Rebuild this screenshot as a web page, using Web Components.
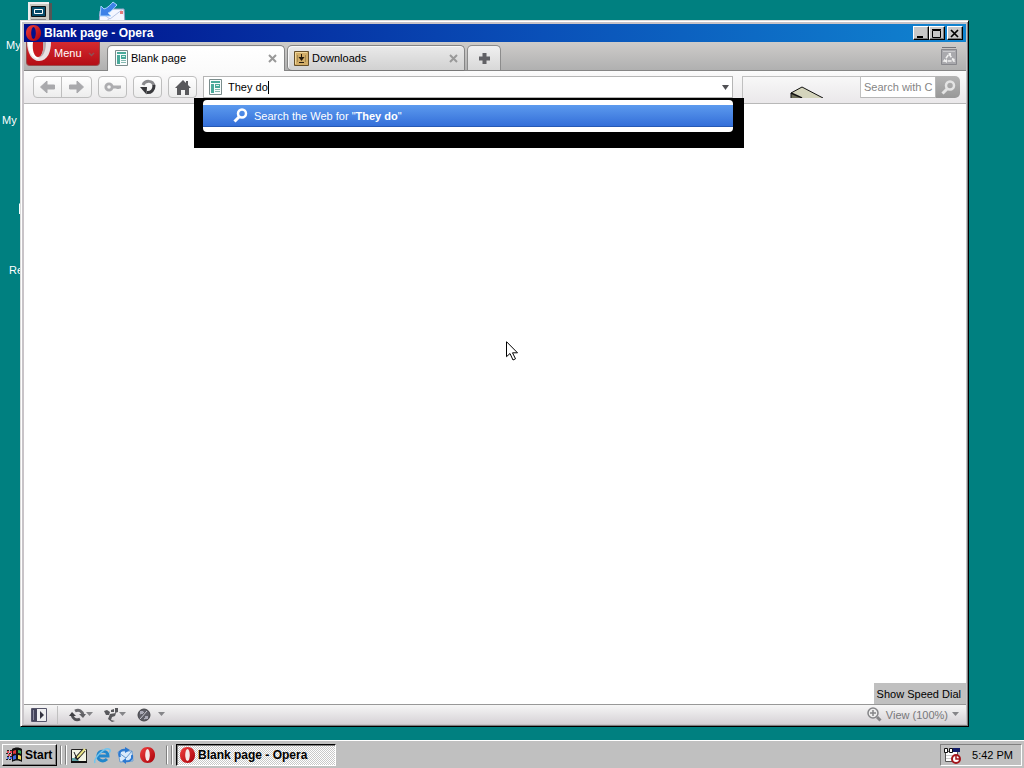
<!DOCTYPE html>
<html lang="en">
<head>
<meta charset="utf-8">
<title>Blank page - Opera</title>
<style>
  html, body { height: 100%; }
  body {
    margin: 0;
    overflow: hidden;
    background: #008080;
    font: 11px/14px "Liberation Sans", Arial, sans-serif;
    color: #000;
  }
</style>
</head>
<body>
<desktop-screen>
  <desktop-icon icon="computer" label="My" style="left: 6px; top: 2px"></desktop-icon>
  <desktop-icon icon="mail" style="left: 98px; top: 0"></desktop-icon>
  <desktop-icon label="My" style="left: 2px; top: 77px"></desktop-icon>
  <desktop-icon icon="sliver" style="left: 18px; top: 202px"></desktop-icon>
  <desktop-icon label="Re" style="left: 9px; top: 227px"></desktop-icon>
  <opera-window caption="Blank page - Opera">
    <opera-tab slot="tabs" icon="page" active>Blank page</opera-tab>
    <opera-tab slot="tabs" icon="download">Downloads</opera-tab>
    <address-bar slot="address" value="They do"></address-bar>
  </opera-window>
  <task-bar slot="taskbar" time="5:42 PM">Blank page - Opera</task-bar>
</desktop-screen>

<script>
// icon name: [width, height, svg content]
const ICONS = {
  opera: [15, 16, `<defs><linearGradient id="g" x2="1" y2="1"><stop stop-color="#f04040"/><stop offset="1" stop-color="#a80008"/></linearGradient></defs><path fill="url(#g)" d="M7.500 0C12 0 15 3.500 15 8s-3 8-7.500 8S0 12.500 0 8s3-8 7.500-8z"/><ellipse cx="7.500" cy="8" rx="2.300" ry="6" fill="var(--hole, #f4e8e8)"/>`],
  operaBig: [24, 20, `<path fill="#e9e2e4" d="M0 0h24c0 9-3 19-12 19C5 19 0 11 0 0z"/><path fill="#fff" d="M1 0h5c0 8 2 14 6 17C5 17 1 9 1 0z"/><path fill="#c8181f" d="M6 0h10c1 8-1 15-5 15S5 8 6 0z"/><path fill="#b5aaac" d="M16 0h3c0 8-2 14-7 16 4-4 5-10 4-16z"/>`],
  page: [13, 16, `<path fill="#f8fcfc" stroke="#7a8c8c" d="M.5.500h12v15H.500z"/><path fill="#49a99a" d="M2 2h9v2H2zM2 5h3v9H2zM6 5h5v4H6z"/><path stroke="#84b8b0" d="M6 10.500h5M6 12.500h5"/><path stroke="#d4f0e8" d="M7 6.500h3"/>`],
  download: [15, 15, `<path fill="#d2ad68" stroke="#66502b" d="M.5.500h14v14H.500z"/><path fill="none" stroke="#f0d79b" d="M1.500 13V1.500H13"/><path stroke="#a58a52" d="M3.500 4v7M11.500 4v7"/><path fill="#251b0c" d="M7 3h1v3h2.500l-3 4-3-4H7zM5 11h5v1H5z"/>`],
  close: [9, 9, `<path stroke="#999" stroke-width="2" d="M1 1l7 7M8 1L1 8"/>`],
  plus: [13, 13, `<path fill="#616165" d="M4.500 1h4v3.500H12v4H8.500V12h-4V8.500H1v-4h3.500z"/>`],
  trash: [18, 20, `<path fill="#a9a9ad" d="M1 3h16v16H1z"/><path stroke="#747478" d="M2 1.500h14"/><path fill="none" stroke="#88888d" d="M1.500 3.500h15v15h-15z"/><path stroke="#c9c9cc" d="M3 5.500h12"/><path fill="none" stroke="#f0f0f0" stroke-width="1.500" stroke-dasharray="4 1.500" d="M9 8l5 7H4z"/><path fill="#f0f0f0" d="M8 7h3v3zM12 12l3 1-2 3zM7 13v4l-3-2z"/>`],
  back: [17, 14, `<path fill="#a9a9ac" stroke="#a9a9ac" stroke-linejoin="round" d="M8 1v4h7.500v4H8v4L1.500 7z"/>`],
  forward: [17, 14, `<path fill="#a9a9ac" stroke="#a9a9ac" stroke-linejoin="round" d="M9 1v4H1.500v4H9v4l6.500-6z"/>`],
  key: [18, 10, `<circle cx="5" cy="5" r="3.200" fill="none" stroke="#adadb0" stroke-width="2.800"/><path fill="#adadb0" d="M8 3.500h9v3h-1.500V7h-3v-.500H8z"/>`],
  reload: [18, 16, `<path fill="none" stroke="#8a8a8d" stroke-width="3" d="M4 6c2-5 10-5 11 1"/><path fill="none" stroke="#39393c" stroke-width="3" d="M14.800 6c.8 5-3 8-7 7.500"/><path fill="#39393c" d="M1 8h7l-.5 7.500z"/>`],
  home: [16, 15, `<path fill="#59595c" d="M8 0L0 8h2v7h4v-5h4v5h4V8h2l-3-3V1h-2v2z"/>`],
  down: [7, 5, `<path fill="#505054" d="M0 0h7L3.500 5z"/>`],
  statusDown: [7, 5, `<path fill="#858588" d="M0 0h7L3.500 4z"/>`],
  menuDown: [7, 5, `<path fill="none" stroke="#8e5054" stroke-width="1.500" d="M1 1l2.500 2.500L6 1"/>`],
  search: [15, 15, `<circle cx="9" cy="5.500" r="4" fill="none" stroke="currentColor" stroke-width="2.500"/><path stroke="currentColor" stroke-width="3" d="M6 9l-4.500 4.500"/>`],
  wedge: [34, 12, `<path fill="#d4d4bc" d="M1 7L12 1l21 11H2z"/><path fill="#6e6e58" d="M1 7l9 5H1z"/><path fill="none" stroke="#111" d="M1 12V7l11-6 21 11"/><path stroke="#111" stroke-width="1.500" d="M1 7l11 5"/>`],
  min: [10, 9, `<path fill="#000" d="M1 7h6v2H1z"/>`],
  max: [10, 9, `<path fill="none" stroke="#000" d="M.5 1.500h8v7h-8z"/><path stroke="#000" d="M0 .500h9"/>`],
  x: [10, 9, `<path stroke="#000" stroke-width="1.700" d="M1 1l7 7M8 1L1 8"/>`],
  panel: [16, 14, `<path fill="#eeeef0" stroke="#55556a" d="M.5.500h15v13H.500z"/><path fill="#44445a" d="M1 1h5v12H1z"/><path fill="#333340" d="M9 3l4 4-4 4z"/><path stroke="#8b8ba0" d="M2.500 2v10"/>`],
  sync: [17, 14, `<path fill="none" stroke="#68686c" stroke-width="3" d="M6 3c4-2 7 0 8 4"/><path fill="none" stroke="#505054" stroke-width="3" d="M3 7c1 4 4 6 8 4"/><path fill="#606064" d="M10 6h7l-3 4z"/><path fill="#404044" d="M0 8l3-4 4 4z"/>`],
  unite: [15, 14, `<path fill="#59595d" d="M0 3l3-1 3 2-1 3H2zM7 2l3-1v3H7zM11 0h3v4l-3 1zM6 6l6-1-1 3-3 1-1 3 4 1-3 1-4-3z"/>`],
  turbo: [14, 14, `<circle cx="7" cy="7" r="6" fill="#5e5e66" stroke="#444448"/><path stroke="#c8c8d0" d="M3 11l7-8M3 6l4-2M7 11l4-2"/><path fill="#aaaab6" d="M3 3h3v3H3zM8 8h3v3H8z"/>`],
  zoom: [15, 15, `<circle cx="6" cy="6" r="5" fill="#eee" stroke="#858588" stroke-width="1.500"/><path stroke="#858588" stroke-width="1.500" d="M3 6h6M6 3v6"/><path stroke="#858588" stroke-width="3" d="M10 10l3.500 3.500"/>`],
  computer: [24, 24, `<path fill="#c8c8c0" d="M0 0h21v24H0z"/><path fill="#eee" d="M0 0h21v2H0zM0 0h2v24H0z"/><path fill="#555" d="M21 1h3v23h-3z"/><path fill="#074b68" stroke="#111" d="M3.500 4.500h14v10h-14z"/><path fill="none" stroke="#fff" d="M6.500 7.500h8v4h-8z"/><path stroke="#888" d="M3 17.500h15"/>`],
  mail: [28, 24, `<path fill="#f4f6ff" stroke="#91a0c5" d="M2 11l5-2h19l1 15H1z"/><path stroke="#b7c5e5" d="M2 12l10 7L25 9M6 23l6-5" fill="none"/><path fill="#e67b7b" d="M22 11h3v3h-3z"/><path fill="#3d82e8" stroke="#a5d2ff" d="M2 16l1-10 3 3c4-1 7-5 9-7l4 3c-3 3-6 7-9 8l3 3z"/>`],
  sliver: [3, 12, `<path fill="#f3ffff" d="M2 1h1v11H1V2z"/>`],
  windows: [17, 16, `<path stroke="#222" stroke-dasharray="2 1" d="M1 3.500h6M0 6.500h6M1 9.500h5M0 12.500h6"/><path stroke="#df4858" stroke-width="2" stroke-dasharray="2 1" d="M1 5h5M2 8h4"/><path stroke="#5570de" stroke-width="2" stroke-dasharray="2 1" d="M1 11h5"/><path fill="#111" d="M6 2c3-2 7-2 10 0v13c-3-2-7-2-10 0z"/><path fill="#de3838" d="M7 4q2-1 3-1v4q-1-1-3 0z"/><path fill="#38a858" d="M12 3q2 0 3 1v3q-1-1-3-1z"/><path fill="#3868de" d="M7 9q2-1 3-1v4q-1 0-3 1z"/><path fill="#ead050" d="M12 8q2 0 3 1v4q-1-1-3-1z"/>`],
  notes: [17, 17, `<path fill="#f2f4e4" stroke="#222" d="M.5 2.500h15v13H.500z"/><path stroke="#111" stroke-width="2" d="M0 15h16"/><path fill="#5aa0a4" d="M1 11h5l2 3H1z"/><path stroke="#222" stroke-width="4" d="M5 12l8-9"/><path stroke="#ece78a" stroke-width="2" d="M6 11l8-9"/><path fill="none" stroke="#222" d="M3 5l3 7 3-2"/>`],
  ie: [17, 17, `<path fill="none" stroke="#2086cc" stroke-width="3" d="M4 9h10C14 3 5 3 4 8s5 8 9 4"/><path fill="none" stroke="#70c4ee" stroke-width="1.500" d="M1 16C-1 12 10 0 15 2c2 1 1 3 0 4"/>`],
  outlook: [17, 17, `<path fill="#d9e9fb" stroke="#6b9dd2" d="M1 5l5-1h9l1 10-13 1z"/><path fill="none" stroke="#6698cc" d="M2 6l7 5 6-7"/><path fill="none" stroke="#2c78d0" stroke-width="2" d="M3 10C1 5 4 2 9 3M15 8c1 5-3 7-7 6"/><path fill="#2c78d0" d="M8 0l5 3-5 3zM9 11v6l-4-3z"/>`],
  calendar: [17, 17, `<path fill="#fff" stroke="#555" d="M1.500 4.500h12v10h-12z"/><path fill="#111b68" d="M7 1h9v4H7z"/><path fill="#fff" stroke="#111" d="M.5 1.500h3v4h-3zM5.500 1.500h3v4h-3z"/><path stroke="#ccc" d="M2 8.500h8M2 11.500h6"/><circle cx="12" cy="12" r="4" fill="#fff" stroke="#a3161b" stroke-width="2"/><path fill="none" stroke="#a3161b" stroke-width="1.500" d="M12 9v3h3"/>`],
  cursor: [13, 20, `<path fill="#fff" stroke="#000" d="M.5.700v15l3.500-3.200 3 6.500 2.500-1.200-3-6h5z"/>`],
};

class BaseElement extends HTMLElement {
  constructor() {
    super();
    this.attachShadow({ mode: "open" });
  }

  connectedCallback() {
    const template = document.createElement("template");
    template.innerHTML = `<style>
      * { box-sizing: border-box; }
      button { font: inherit; color: inherit; margin: 0; padding: 0; border: 0; background: none; }
      input { font: inherit; margin: 0; padding: 0; border: 0; outline: 0; background: none; }
      ${this.getStyles()}
    </style>${this.getTemplate()}`;
    this.shadowRoot.replaceChildren(template.content.cloneNode(true));
  }
}

class UiIcon extends BaseElement {
  getTemplate() {
    const [w, h, shape] = ICONS[this.getAttribute("name")];
    return `<svg width="${w}" height="${h}" viewBox="0 0 ${w} ${h}" aria-hidden="true">${shape}</svg>`;
  }

  getStyles() {
    return `:host { display: block; flex: none; } svg { display: block; }`;
  }
}

class DesktopScreen extends BaseElement {
  getTemplate() {
    return `<main><slot></slot><ui-icon name="cursor"></ui-icon></main><slot name="taskbar"></slot>`;
  }

  getStyles() {
    return `
      :host { display: flex; flex-direction: column; height: 100vh; }
      main { position: relative; flex: 1; min-height: 0; }
      main > ui-icon { position: absolute; left: 506px; top: 341px; }
    `;
  }
}

class DesktopIcon extends BaseElement {
  getTemplate() {
    const icon = this.getAttribute("icon");
    return `<div class="picture">${icon ? `<ui-icon name="${icon}"></ui-icon>` : ""}</div>
      <span>${this.getAttribute("label") || ""}</span>`;
  }

  getStyles() {
    return `
      :host { position: absolute; color: #fff; }
      .picture { height: 36px; }
      :host([icon="computer"]) .picture { padding-left: 22px; }
    `;
  }
}

class WindowButton extends BaseElement {
  getTemplate() {
    return `<button aria-label="${this.getAttribute("label")}"><ui-icon name="${this.getAttribute("icon")}"></ui-icon></button>`;
  }

  getStyles() {
    return `
      :host { display: block; }
      button {
        display: grid; place-items: center; width: 16px; height: 14px;
        background: #c8c8c8; border: 1px solid; border-color: #fff #000 #000 #fff;
        box-shadow: inset -1px -1px #808080;
      }
    `;
  }
}

class OperaTab extends BaseElement {
  getTemplate() {
    return `<button class="tab"><ui-icon name="${this.getAttribute("icon")}"></ui-icon><slot></slot></button>
      <button class="close" aria-label="Close tab"><ui-icon name="close"></ui-icon></button>`;
  }

  getStyles() {
    return `
      :host {
        display: flex; align-items: center; box-sizing: border-box;
        flex: 0 1 178px; height: 26px; padding: 0 6px;
        border: 1px solid #858585; border-bottom-color: #777; border-radius: 5px 5px 0 5px;
        background: linear-gradient(#eaeaea, #d1d1d1);
        box-shadow: inset 1px 1px #f8f8f8;
      }
      :host([active]) {
        height: 28px; padding: 0 7px 3px; border-bottom: 0; border-radius: 5px 5px 0 0;
        background: linear-gradient(#fff, #fafafa);
      }
      .tab { display: flex; align-items: center; gap: 3px; flex: 1; height: 24px; text-align: left; }
    `;
  }
}

class ToolButton extends BaseElement {
  getTemplate() {
    return this.getAttribute("icons").split(" ").map((name) =>
      `<button aria-label="${name}"><ui-icon name="${name}"></ui-icon></button>`
    ).join("");
  }

  getStyles() {
    return `
      :host {
        display: flex; flex: none; box-sizing: border-box; height: 22px;
        border: 1px solid #bebebe; border-radius: 4px;
        background: linear-gradient(#fff, #ededed);
      }
      button { display: grid; place-items: center; width: 27px; }
      button + button { width: 30px; border-left: 1px solid #bebebe; }
    `;
  }
}

class AddressBar extends BaseElement {
  getTemplate() {
    const value = this.getAttribute("value");
    return `
      <ui-icon name="page"></ui-icon>
      <input aria-label="Address" value="${value}"><i class="caret"></i>
      <button class="history" aria-label="History"><ui-icon name="down"></ui-icon></button>
      <div class="popup">
        <div class="list">
          <button><ui-icon name="search"></ui-icon><span>Search the Web for "<b>${value}</b>"</span></button>
        </div>
      </div>
    `;
  }

  getStyles() {
    return `
      :host {
        position: relative; display: flex; align-items: center; box-sizing: border-box;
        flex: 1; min-width: 0; height: 22px; padding: 0 3px 0 5px;
        border: 1px solid #b5b5b5; background: #fff;
      }
      input { field-sizing: content; margin-left: 6px; }
      .caret { width: 1px; height: 13px; background: #000; }
      .history { margin-left: auto; }
      .popup {
        position: absolute; z-index: 1; left: -10px; right: -12px; top: 21px;
        height: 50px; padding: 2px 11px 0 9px; background: #000;
      }
      .list { height: 32px; padding: 5px 0; border-radius: 4px; background: #fff; }
      .list button {
        display: flex; align-items: center; gap: 6px; width: 100%; height: 22px; padding-left: 30px;
        color: #fff; background: linear-gradient(#5c9aee, #346fd9); border-bottom: 1px solid #2659b4;
      }
    `;
  }
}

class OperaWindow extends BaseElement {
  getTemplate() {
    return `
      <header class="title">
        <ui-icon name="opera"></ui-icon>
        <b>${this.getAttribute("caption")}</b>
        <div class="controls">
          <window-button icon="min" label="Minimize"></window-button>
          <window-button icon="max" label="Maximize"></window-button>
          <window-button class="quit" icon="x" label="Close"></window-button>
        </div>
      </header>
      <nav class="tabs">
        <button class="menu"><ui-icon name="operaBig"></ui-icon>Menu<ui-icon name="menuDown"></ui-icon></button>
        <slot name="tabs"></slot>
        <button class="new" aria-label="New tab"><ui-icon name="plus"></ui-icon></button>
        <button class="trash" aria-label="Closed tabs"><ui-icon name="trash"></ui-icon></button>
      </nav>
      <div class="tools">
        <tool-button icons="back forward"></tool-button>
        <tool-button icons="key"></tool-button>
        <tool-button icons="reload"></tool-button>
        <tool-button icons="home"></tool-button>
        <slot name="address"></slot>
        <div class="side">
          <div class="gap"><ui-icon name="wedge"></ui-icon></div>
          <input aria-label="Search" placeholder="Search with C">
          <button class="go" aria-label="Search"><ui-icon name="search"></ui-icon></button>
        </div>
      </div>
      <section class="content">
        <button class="dial">Show Speed Dial</button>
      </section>
      <footer>
        <button class="panel" aria-label="Panels"><ui-icon name="panel"></ui-icon></button>
        <button aria-label="Synchronize"><ui-icon name="sync"></ui-icon><ui-icon name="statusDown"></ui-icon></button>
        <button aria-label="Unite"><ui-icon name="unite"></ui-icon><ui-icon name="statusDown"></ui-icon></button>
        <button class="turbo" aria-label="Turbo"><ui-icon name="turbo"></ui-icon><ui-icon name="statusDown"></ui-icon></button>
        <button class="view"><ui-icon name="zoom"></ui-icon>View (100%)<ui-icon name="statusDown"></ui-icon></button>
      </footer>
    `;
  }

  getStyles() {
    return `
      :host {
        position: absolute; inset: 20px 55px 13px 20px;
        display: flex; flex-direction: column; box-sizing: border-box;
        padding: 3px 2px 2px 3px; border: 1px solid; border-color: #dcdcdc #000 #000 #dcdcdc;
        background: #c8c4c8; box-shadow: inset 1px 1px #fff, inset -1px -1px #808080;
      }
      .title {
        display: flex; align-items: center; gap: 3px; flex: none;
        height: 18px; padding: 0 3px 0 2px; --hole: #00108c;
        color: #fff; background: linear-gradient(90deg, #00108c, #0a50b8 55%, #1084d0);
        font-size: 12px;
      }
      .controls { display: flex; margin-left: auto; }
      .quit { margin-left: 2px; }

      .tabs {
        display: flex; gap: 2px; flex: none; height: 29px; padding: 0 8px 0 2px;
        background: linear-gradient(#ceccca, #b0b0b0);
        border-bottom: 1px solid #858585;
      }
      .tabs slot { display: flex; align-items: flex-start; gap: 2px; flex: 0 1 358px; margin: 3px 0 -1px; }
      .menu {
        display: flex; align-items: flex-start; gap: 3px; flex: none;
        width: 74px; height: 24px; margin-right: 5px; overflow: hidden;
        color: #fff; line-height: 22px; background: linear-gradient(#d52b30, #b40d15);
        border: 1px solid #9b4b4b; border-top: 0; border-radius: 0 0 4px 4px;
      }
      .menu ui-icon:last-child { margin: 10px 0 0 3px; }
      .new {
        display: grid; place-items: center; width: 34px; height: 25px; margin-top: 3px;
        border: 1px solid #8c8c8c; border-bottom: 0; border-radius: 5px 5px 0 0;
        background: linear-gradient(#f0f0f0, #d8d8d8);
      }
      .trash { margin-left: auto; }

      .tools {
        display: flex; align-items: center; gap: 6px; flex: none;
        height: 33px; padding: 0 6px 0 9px;
        background: linear-gradient(#fbfbfb, #eae8ea); border-bottom: 1px solid #b8b8b8;
      }
      .side { display: flex; width: 218px; height: 22px; margin-left: 3px; }
      .gap { display: flex; align-items: flex-end; justify-content: flex-end; flex: 1; padding-right: 36px; border: 1px solid #c0c0c0; border-bottom: 0; }
      .side input { width: 75px; padding-left: 3px; background: #fff; border: 1px solid #b8b8b8; border-left: 0; }
      .side input::placeholder { color: #858585; }
      .go { display: grid; place-items: center; width: 24px; color: #e4e4e4; background: linear-gradient(#b4b4b4, #989898); border-radius: 0 5px 5px 0; }

      .content { display: flex; flex: 1; min-height: 0; align-items: flex-end; justify-content: flex-end; background: #fff; }
      .dial { height: 21px; padding: 0 5px 0 3px; background: #c0c0c0; }

      footer {
        display: flex; align-items: center; gap: 11px; flex: none; height: 20px; padding: 0 7px;
        background: linear-gradient(#f6f6f6, #d6d2d6); border-top: 1px solid #989898;
      }
      footer button { display: flex; align-items: center; height: 18px; }
      .panel { padding-right: 10px; border-right: 1px solid #c0c0c0; }
      .turbo { gap: 7px; }
      .view { gap: 4px; margin-left: auto; color: #77777a; }
    `;
  }
}

class TaskBar extends BaseElement {
  getTemplate() {
    return `
      <button class="start"><ui-icon name="windows"></ui-icon>Start</button>
      <i class="grip"></i>
      <div class="quick">
        <button aria-label="Desktop"><ui-icon name="notes"></ui-icon></button>
        <button aria-label="Internet Explorer"><ui-icon name="ie"></ui-icon></button>
        <button aria-label="Outlook Express"><ui-icon name="outlook"></ui-icon></button>
        <button aria-label="Opera"><ui-icon name="opera"></ui-icon></button>
      </div>
      <i class="grip"></i>
      <button class="task"><ui-icon name="opera"></ui-icon><slot></slot></button>
      <div class="tray"><ui-icon name="calendar"></ui-icon><time>${this.getAttribute("time")}</time></div>
    `;
  }

  getStyles() {
    return `
      :host {
        display: flex; align-items: center; flex: none; box-sizing: border-box;
        height: 28px; padding: 1px 2px 0; background: #c0c0c0; border-top: 1px solid #fff;
      }
      button { display: flex; align-items: center; }
      .start {
        gap: 2px; width: 55px; height: 22px; padding-left: 3px;
        font-weight: bold; font-size: 12px;
        border: 1px solid; border-color: #fff #000 #000 #fff; box-shadow: inset -1px -1px #808080;
      }
      .grip { width: 6px; height: 20px; margin-left: 3px; border: 1px solid; border-color: transparent #808080 transparent #808080; box-shadow: inset 1px 0 #fff, 1px 0 #fff; }
      .quick { display: flex; align-items: center; gap: 6px; margin: 0 8px 0 5px; }
      .task {
        gap: 3px; width: 160px; height: 22px; margin-left: 4px; padding-left: 3px;
        font-weight: bold; font-size: 12px;
        border: 1px solid; border-color: #000 #fff #fff #000; box-shadow: inset 1px 1px #808080;
        background: repeating-conic-gradient(#fff 0 25%, #c8c8c8 0 50%) 0 0 / 2px 2px;
      }
      .tray {
        display: flex; align-items: center; gap: 11px; height: 22px; margin-left: auto; padding: 0 8px 0 3px;
        border: 1px solid; border-color: #808080 #fff #fff #808080;
      }
    `;
  }
}

customElements.define("ui-icon", UiIcon);
customElements.define("window-button", WindowButton);
customElements.define("tool-button", ToolButton);
customElements.define("opera-tab", OperaTab);
customElements.define("address-bar", AddressBar);
customElements.define("opera-window", OperaWindow);
customElements.define("desktop-icon", DesktopIcon);
customElements.define("task-bar", TaskBar);
customElements.define("desktop-screen", DesktopScreen);
</script>
</body>
</html>
